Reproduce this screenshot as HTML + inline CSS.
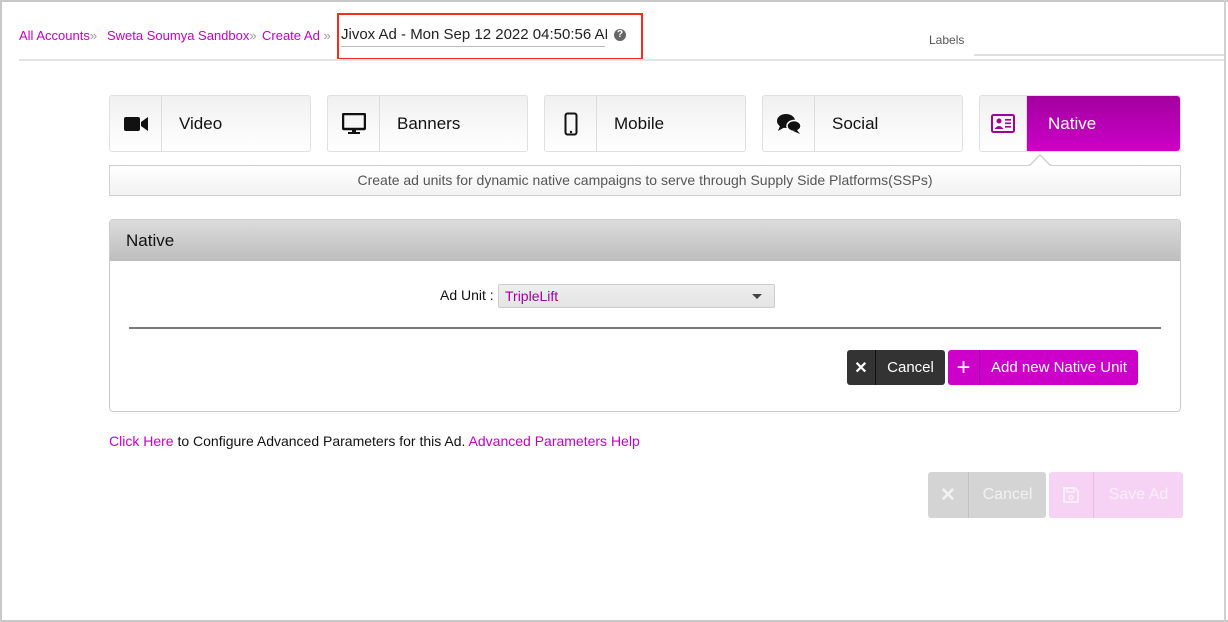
<!DOCTYPE html>
<html><head><meta charset="utf-8"><style>
*{box-sizing:border-box;margin:0;padding:0}
body{width:1228px;height:622px;background:#fff;font-family:"Liberation Sans",Arial,sans-serif;position:relative;overflow:hidden}
.frame{position:absolute;left:0;top:0;width:1228px;height:622px;border:2px solid #c8c8c8;border-right:none}
.vline{position:absolute;left:1224px;top:0;width:2px;height:622px;background:#d0d0d0}
.abs{position:absolute}
a,.m{color:#c400c4;text-decoration:none}
.bc{top:28px;font-size:13px;color:#c400c4;white-space:nowrap}
.s{color:#999}
.redbox{left:337px;top:13px;width:306px;height:47px;border:2px solid #f2301b}
.title{left:341px;top:26px;font-size:15px;color:#222;white-space:nowrap;width:266px;overflow:hidden}
.tline{left:341px;top:46px;width:264px;height:1px;background:#bbb}
.help{left:614px;top:29px;width:12px;height:12px;border-radius:50%;background:#666;color:#fff;font-size:10px;font-weight:bold;text-align:center;line-height:12px}
.hr{left:19px;top:59px;width:1205px;height:2px;background:#e4e4e4}
.labels{left:929px;top:33px;font-size:12px;color:#555}
.lline{left:974px;top:54px;width:250px;height:2px;background:#e0e0e0}
.tab{position:absolute;top:95px;height:57px;border:1px solid #e0e0e0;border-radius:3px;background:linear-gradient(#f0f0f0,#fff);display:flex}
.tab .ic{width:52px;border-right:1px solid #ddd;display:flex;align-items:center;justify-content:center}
.tab .lb{flex:1;padding-left:17px;line-height:55px;font-size:17px;color:#111}
.tab.act .lb{background:linear-gradient(#a2009e,#cc00c9);color:#fff;border-radius:0 3px 3px 0;padding-left:21px}
.desc{left:109px;top:165px;width:1072px;height:31px;border:1px solid #d0d0d0;background:linear-gradient(#fff,#f2f2f2);text-align:center;font-size:14px;color:#555;line-height:29px}
.arrow{left:1028px;top:154px;width:0;height:0;border-left:12px solid transparent;border-right:12px solid transparent;border-bottom:12px solid #d0d0d0}
.arrow2{left:1029px;top:156px;width:0;height:0;border-left:11px solid transparent;border-right:11px solid transparent;border-bottom:11px solid #fff}
.panel{left:109px;top:219px;width:1072px;height:193px;border:1px solid #ccc;border-radius:4px;overflow:hidden}
.ph{height:41px;background:linear-gradient(#dcdcdc,#bdbdbd);font-size:17px;color:#111;padding-left:16px;line-height:41px}
.adl{left:440px;top:287px;font-size:14px;color:#111}
.sel{left:498px;top:284px;width:277px;height:24px;border:1px solid #ccc;border-radius:2px;background:linear-gradient(#eee,#e4e4e4);font-size:14px;color:#a000a0;padding-left:6px;line-height:22px}
.caret{left:752px;top:294px;border-left:5px solid transparent;border-right:5px solid transparent;border-top:5px solid #444}
.pline{left:129px;top:327px;width:1032px;height:2px;background:#777}
.btn{position:absolute;display:flex;border-radius:3px;color:#fff;font-size:15px}
.btn .i{display:flex;align-items:center;justify-content:center;font-weight:bold}
.foot{left:109px;top:433px;font-size:14px;color:#111;white-space:nowrap}
</style></head><body>
<div class="frame"></div><div class="vline"></div>
<div class="abs bc" style="left:19px">All Accounts<span class="s">»</span></div>
<div class="abs bc" style="left:107px">Sweta Soumya Sandbox<span class="s">»</span></div>
<div class="abs bc" style="left:262px">Create Ad<span class="s"> »</span></div>
<div class="abs title">Jivox Ad - Mon Sep 12 2022 04:50:56 AM</div>
<div class="abs tline"></div>
<div class="abs help">?</div>
<div class="abs redbox"></div>
<div class="abs hr"></div>
<div class="abs labels">Labels</div>
<div class="abs lline"></div>

<div class="tab" style="left:109px;width:202px"><div class="ic"><svg width="26" height="18" viewBox="0 0 26 18"><rect x="1" y="2" width="16" height="14" rx="2" fill="#111"/><path d="M18 7 L25 2 V16 L18 11Z" fill="#111"/></svg></div><div class="lb">Video</div></div>
<div class="tab" style="left:327px;width:201px"><div class="ic"><svg width="24" height="22" viewBox="0 0 24 22"><rect x="1" y="1" width="22" height="15" rx="1" fill="none" stroke="#111" stroke-width="2.5"/><rect x="10" y="16" width="4" height="3" fill="#111"/><rect x="6" y="19" width="12" height="2" fill="#111"/></svg></div><div class="lb">Banners</div></div>
<div class="tab" style="left:544px;width:202px"><div class="ic"><svg width="14" height="24" viewBox="0 0 14 24"><rect x="1.5" y="1.5" width="11" height="21" rx="2" fill="none" stroke="#111" stroke-width="2"/><circle cx="7" cy="20" r="1.2" fill="#111"/></svg></div><div class="lb">Mobile</div></div>
<div class="tab" style="left:762px;width:201px"><div class="ic"><svg width="26" height="22" viewBox="0 0 26 22"><ellipse cx="10" cy="8" rx="9" ry="7" fill="#111"/><path d="M4 13 L2 18 L9 14Z" fill="#111"/><ellipse cx="18" cy="13" rx="7" ry="5.5" fill="#111" stroke="#fff" stroke-width="1.5"/><path d="M21 17 L24 21 L17 18Z" fill="#111"/></svg></div><div class="lb">Social</div></div>
<div class="tab act" style="left:979px;width:202px"><div class="ic" style="width:47px"><svg width="24" height="19" viewBox="0 0 24 19"><rect x="1" y="1" width="22" height="17" rx="1.5" fill="none" stroke="#9c0096" stroke-width="2"/><circle cx="8" cy="7" r="2.5" fill="#9c0096"/><path d="M3.5 15 Q8 9 12.5 15Z" fill="#9c0096"/><rect x="14" y="5" width="6" height="1.6" fill="#9c0096"/><rect x="14" y="8.5" width="6" height="1.6" fill="#9c0096"/><rect x="14" y="12" width="6" height="1.6" fill="#9c0096"/></svg></div><div class="lb">Native</div></div>

<div class="abs desc">Create ad units for dynamic native campaigns to serve through Supply Side Platforms(SSPs)</div>
<div class="abs arrow"></div><div class="abs arrow2"></div>

<div class="abs panel"><div class="ph">Native</div></div>
<div class="abs adl">Ad Unit :</div>
<div class="abs sel">TripleLift</div>
<div class="abs caret"></div>
<div class="abs pline"></div>

<div class="btn" style="left:847px;top:350px;width:98px;height:35px;background:#333"><div class="i" style="width:29px;border-right:1px solid #111;font-size:16px">✕</div><div style="flex:1;text-align:center;line-height:35px">Cancel</div></div>
<div class="btn" style="left:948px;top:350px;width:190px;height:35px;background:#cc00c9"><div class="i" style="width:32px;border-right:1px solid #8a0088;font-size:24px;font-weight:normal">+</div><div style="flex:1;text-align:center;line-height:35px">Add new Native Unit</div></div>

<div class="abs foot"><a>Click Here</a> to Configure Advanced Parameters for this Ad. <a>Advanced Parameters Help</a></div>

<div class="btn" style="left:928px;top:472px;width:118px;height:46px;background:#d4d4d4;color:#f2f2f2"><div class="i" style="width:41px;border-right:1px solid #c2c2c2;font-size:19px">✕</div><div style="flex:1;text-align:center;line-height:46px;font-size:16px">Cancel</div></div>
<div class="btn" style="left:1049px;top:472px;width:134px;height:46px;background:#f6d2f4;color:#fbeefa"><div class="i" style="width:45px;border-right:1px solid #e8bde5"><svg width="18" height="18" viewBox="0 0 18 18"><path d="M2 2 H13 L16 5 V16 H2Z" fill="none" stroke="#fbeefa" stroke-width="2"/><rect x="5" y="2" width="7" height="4" fill="none" stroke="#fbeefa" stroke-width="1.5"/><circle cx="9" cy="11.5" r="2" fill="none" stroke="#fbeefa" stroke-width="1.5"/></svg></div><div style="flex:1;text-align:center;line-height:46px;font-size:16px">Save Ad</div></div>
</body></html>
